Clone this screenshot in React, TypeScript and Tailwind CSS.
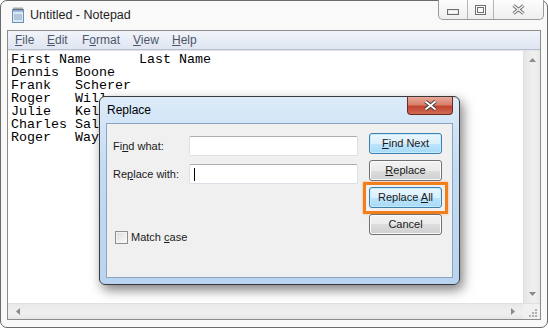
import React from "react";

const lines = [
  "First Name      Last Name",
  "Dennis  Boone",
  "Frank   Scherer",
  "Roger   Will",
  "Julie   Kel",
  "Charles Sal",
  "Roger   Way",
];

const menu = [
  { pre: "", key: "F", post: "ile", w: "w-[32px]" },
  { pre: "", key: "E", post: "dit", w: "w-[35px]" },
  { pre: "F", key: "o", post: "rmat", w: "w-[51px]" },
  { pre: "", key: "V", post: "iew", w: "w-[39px]" },
  { pre: "", key: "H", post: "elp", w: "w-[36px]" },
];

function NotepadIcon() {
  return (
    <svg width="16" height="17" viewBox="0 0 16 17">
      <rect x="2.5" y="2.5" width="11" height="13" fill="#dbe9f6" stroke="#6f8fb3" />
      <rect x="3" y="3" width="10" height="2" fill="#9fbfe0" />
      <line x1="4" y1="8" x2="12" y2="8" stroke="#8aa6c4" />
      <line x1="4" y1="10" x2="12" y2="10" stroke="#8aa6c4" />
      <line x1="4" y1="12" x2="12" y2="12" stroke="#8aa6c4" />
      {[4, 6, 8, 10, 12].map((x) => (
        <line key={x} x1={x} y1="0.5" x2={x} y2="3.5" stroke="#5a5a5a" />
      ))}
    </svg>
  );
}

function CaptionButtons() {
  return (
    <div className="flex h-[20px] self-start -mt-px mr-[3px] border border-t-0 border-[#9a9a9a] rounded-b-[5px] bg-[linear-gradient(#fdfdfd,#eeeeee)] overflow-hidden">
      <div className="w-[29px] flex items-center justify-center border-r border-[#b5b5b5]">
        <svg width="12" height="6" viewBox="0 0 12 6" className="mt-[5px]">
          <rect x="0.5" y="0.5" width="11" height="5" fill="#d9d9d9" stroke="#6f6f6f" />
          <rect x="1.5" y="1.5" width="9" height="3" fill="#fafafa" />
        </svg>
      </div>
      <div className="w-[26px] flex items-center justify-center border-r border-[#b5b5b5]">
        <svg width="11" height="10" viewBox="0 0 11 10">
          <rect x="0.5" y="0.5" width="10" height="9" fill="#fafafa" stroke="#6f6f6f" />
          <rect x="2.5" y="2.5" width="6" height="5" fill="#fafafa" stroke="#6f6f6f" />
        </svg>
      </div>
      <div className="w-[49px] flex items-center justify-center">
        <svg width="13" height="11" viewBox="0 0 13 11">
          <path d="M1.5 1.5 L11.5 9.5 M11.5 1.5 L1.5 9.5" stroke="#6f6f6f" strokeWidth="3.4" />
          <path d="M1.5 1.5 L11.5 9.5 M11.5 1.5 L1.5 9.5" stroke="#f4f4f4" strokeWidth="1.6" />
        </svg>
      </div>
    </div>
  );
}

function Arrow({ dir }: { dir: "up" | "down" | "left" | "right" }) {
  const d = {
    up: "M0 4 L3.5 0 L7 4 Z",
    down: "M0 0 L7 0 L3.5 4 Z",
    left: "M4 0 L4 7 L0 3.5 Z",
    right: "M0 0 L4 3.5 L0 7 Z",
  }[dir];
  const vertical = dir === "up" || dir === "down";
  return (
    <svg width={vertical ? 7 : 4} height={vertical ? 4 : 7} viewBox={vertical ? "0 0 7 4" : "0 0 4 7"}>
      <path d={d} fill="#8a8a8a" />
    </svg>
  );
}

function WinButton({
  children,
  blue = false,
  className = "",
}: {
  children: React.ReactNode;
  blue?: boolean;
  className?: string;
}) {
  return (
    <div
      className={`relative w-[73px] h-[21px] rounded-[3px] border flex items-center justify-center text-[11px] text-[#1a1a1a] ${
        blue
          ? "border-[#3c7fb1] bg-[linear-gradient(#eaf6fd_0%,#d9f0fc_50%,#bee6fd_50%,#a7d9f5_100%)] shadow-[inset_0_0_0_1px_#c6ecfc]"
          : "border-[#707070] bg-[linear-gradient(#f2f2f2_0%,#ebebeb_50%,#dddddd_50%,#cfcfcf_100%)] shadow-[inset_0_0_0_1px_#fcfcfc]"
      } ${className}`}
    >
      {children}
    </div>
  );
}

function ReplaceDialog() {
  return (
    <div className="absolute left-[99px] top-[96px] w-[361px] h-[189px] rounded-[6px] border border-[#3a3a3a] bg-[linear-gradient(#dcebf9,#c2dbf3_40%,#b9d4f0)] shadow-[3px_5px_12px_rgba(0,0,0,0.5)] flex flex-col">
      {/* Title */}
      <div className="h-[26px] flex items-center pl-[7px] text-[12px] text-black">Replace</div>
      <div className="absolute top-0 right-[6px] w-[46px] h-[18px] rounded-b-[4px] border border-t-0 border-[#6e2a20] bg-[linear-gradient(#e9a898_0%,#d8806c_45%,#c3442f_55%,#d06a55_100%)] flex items-center justify-center">
        <svg width="13" height="11" viewBox="0 0 13 11">
          <path d="M1.5 1.5 L11.5 9.5 M11.5 1.5 L1.5 9.5" stroke="#3d3d3d" strokeWidth="3.6" />
          <path d="M1.5 1.5 L11.5 9.5 M11.5 1.5 L1.5 9.5" stroke="#ffffff" strokeWidth="1.8" />
        </svg>
      </div>

      {/* Client */}
      <div className="flex-1 mx-[6px] mb-[6px] border border-[#8aa3be] bg-[#f0f0f0] flex pl-[6px] text-[11px] text-[#1a1a1a]">
        <div className="flex flex-col pt-[12px] w-[245px]">
          <div className="flex items-center h-[20px]">
            <span className="w-[76px]">
              Fi<u>n</u>d what:
            </span>
            <div className="w-[169px] h-[20px] rounded-[2px] border border-[#dbdfe6] border-t-[#abadb3] bg-white" />
          </div>
          <div className="flex items-center h-[20px] mt-[8px]">
            <span className="w-[76px]">
              Re<u>p</u>lace with:
            </span>
            <div className="w-[169px] h-[20px] rounded-[2px] border border-[#dbdfe6] border-t-[#abadb3] bg-white flex items-center pl-[4px]">
              <div className="w-px h-[13px] bg-black" />
            </div>
          </div>
          <div className="flex items-center mt-[45px] ml-[2px]">
            <div className="w-[13px] h-[13px] border border-[#8e8f8f] bg-[linear-gradient(135deg,#dcdcdc,#fbfbfb)] shadow-[inset_0_0_0_1px_#f4f4f4]" />
            <span className="ml-[3px]">
              Match <u>c</u>ase
            </span>
          </div>
        </div>
        <div className="flex flex-col ml-[11px] pt-[9px] gap-[6px]">
          <WinButton blue className="shadow-[inset_0_0_0_1px_#58d6fa]">
            <span>
              <u>F</u>ind Next
            </span>
          </WinButton>
          <WinButton>
            <span>
              <u>R</u>eplace
            </span>
          </WinButton>
          <WinButton blue>
            <span>
              Replace <u>A</u>ll
            </span>
            {/* orange highlight frame */}
            <span className="absolute -left-[7px] -right-[7px] -top-[6px] -bottom-[7px] border-[3px] border-[#f07e1b] shadow-[0_0_2px_rgba(240,126,27,0.6)]" />
          </WinButton>
          <WinButton>Cancel</WinButton>
        </div>
      </div>
    </div>
  );
}

export default function App() {
  return (
    <div className="w-[548px] h-[329px] bg-white relative overflow-hidden font-['Liberation_Sans',Arial,sans-serif]">
      {/* Notepad window */}
      <div className="w-full h-[328px] rounded-[7px] border border-[#6a6a6a] bg-[#f9f9f9] flex flex-col">
        {/* Title bar */}
        <div className="h-[29px] flex items-center">
          <div className="ml-[9px]">
            <NotepadIcon />
          </div>
          <span className="ml-[4px] text-[12.5px] text-[#1e1e1e]">Untitled - Notepad</span>
          <div className="flex-1" />
          <CaptionButtons />
        </div>

        {/* Client */}
        <div className="mx-[6px] h-[290px] border border-[#8b8b8b] bg-white flex flex-col">
          <div className="h-[19px] border-b border-[#b8c0d0] bg-[linear-gradient(#f1f4fa,#dfe5f1)] flex items-center pl-[7px] text-[12px] text-[#4f586a]">
            {menu.map((m) => (
              <span key={m.post} className={m.w}>
                {m.pre}
                <u>{m.key}</u>
                {m.post}
              </span>
            ))}
          </div>
          <div className="flex-1 flex border-t border-[#e4e4e4]">
            <pre className="flex-1 pl-[3px] pt-[2px] font-['Liberation_Mono',monospace] text-[13.33px] leading-[13px] text-black">
              {lines.join("\n")}
            </pre>
            <div className="w-[17px] border-l border-[#e0e0e0] bg-[linear-gradient(90deg,#e6e6e6,#f0f0f0_60%,#e8e8e8)] flex flex-col items-center justify-between py-[7px]">
              <Arrow dir="up" />
              <Arrow dir="down" />
            </div>
          </div>
          <div className="h-[16px] flex border-t border-[#e0e0e0]">
            <div className="flex-1 bg-[linear-gradient(#e8e8e8,#f0f0f0_60%,#e6e6e6)] flex items-center justify-between px-[8px]">
              <Arrow dir="left" />
              <Arrow dir="right" />
            </div>
            <div className="w-[17px] bg-[#f0f0f0] relative">
              <svg width="17" height="16" viewBox="0 0 17 16" className="absolute inset-0">
                {[
                  [12, 5],
                  [9, 8],
                  [12, 8],
                  [6, 11],
                  [9, 11],
                  [12, 11],
                ].map(([x, y]) => (
                  <rect key={`${x}-${y}`} x={x} y={y} width="2" height="2" fill="#b0b0b0" />
                ))}
              </svg>
            </div>
          </div>
        </div>
      </div>

      <ReplaceDialog />
    </div>
  );
}
